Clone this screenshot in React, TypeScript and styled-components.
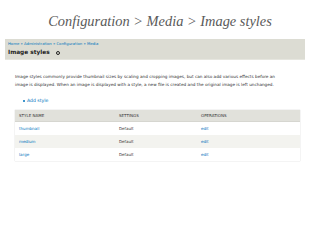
import React from "react";
import styled, { createGlobalStyle } from "styled-components";

const GlobalStyle = createGlobalStyle`
  html, body {
    margin: 0;
    padding: 0;
    background: #ffffff;
  }
  body {
    width: 320px;
    height: 240px;
    overflow: hidden;
    font-family: "DejaVu Sans", "Open Sans", sans-serif;
  }
`;

const Page = styled.div`
  display: flex;
  flex-direction: column;
  width: 320px;
`;

const Title = styled.h1`
  margin: 0;
  padding-top: 13px;
  height: 39px;
  box-sizing: border-box;
  text-align: center;
  font-family: "Liberation Serif", "DejaVu Serif", serif;
  font-style: italic;
  font-weight: normal;
  font-size: 14.4px;
  line-height: 16px;
  color: #5a5a5a;
`;

const Header = styled.div`
  margin: 0 15px 0 5px;
  height: 21px;
  box-sizing: border-box;
  padding: 2px 3px 0;
  background: #dcdcd3;
  border-bottom: 1px solid #e6e6df;
  display: flex;
  flex-direction: column;
`;

const Crumbs = styled.div`
  font-size: 3.8px;
  line-height: 6px;
  color: #0074bd;
`;

const Heading = styled.h2`
  margin: 1px 0 0;
  display: flex;
  align-items: center;
  gap: 4px;
  font-size: 5.8px;
  line-height: 9px;
  font-weight: bold;
  color: #1d1d1d;
`;

const Gear = styled.span`
  flex: none;
  width: 2px;
  height: 2px;
  border: 1px solid #222;
  border-radius: 50%;
  margin: 1px 0 0 2px;
`;

const Content = styled.div`
  padding: 13px 20px 0 15px;
  display: flex;
  flex-direction: column;
`;

const Intro = styled.p`
  margin: 0;
  max-width: 274px;
  font-size: 4.2px;
  line-height: 8px;
  color: #333;
`;

const Action = styled.a`
  margin: 8px 0 0 8px;
  display: flex;
  align-items: center;
  gap: 2px;
  font-size: 4.6px;
  line-height: 7px;
  color: #0074bd;
  text-decoration: none;
  &::before {
    content: "";
    width: 2px;
    height: 2px;
    border-radius: 50%;
    background: #0074bd;
  }
`;

const Table = styled.table`
  margin-top: 6px;
  width: 285px;
  border-collapse: collapse;
  box-shadow: 0 0 1px rgba(0, 0, 0, 0.25);
  font-size: 4px;
`;

const Th = styled.th<{ $w?: number }>`
  background: #e1e1db;
  text-align: left;
  font-weight: normal;
  text-transform: uppercase;
  color: #333;
  height: 11px;
  padding: 0 4px;
  border-bottom: 1px solid #d6d6d0;
  width: ${(p) => (p.$w ? `${p.$w}px` : "auto")};
`;

const Row = styled.tr<{ $alt?: boolean }>`
  background: ${(p) => (p.$alt ? "#f3f3ef" : "#ffffff")};
`;

const Td = styled.td<{ $link?: boolean }>`
  height: 13px;
  padding: 0 4px;
  color: ${(p) => (p.$link ? "#0074bd" : "#333")};
`;

const styles = ["thumbnail", "medium", "large"];

export default function App() {
  return (
    <Page>
      <GlobalStyle />
      <Title>Configuration &gt; Media &gt; Image styles</Title>
      <Header>
        <Crumbs>Home » Administration » Configuration » Media</Crumbs>
        <Heading>
          Image styles <Gear />
        </Heading>
      </Header>
      <Content>
        <Intro>
          Image styles commonly provide thumbnail sizes by scaling and cropping images, but can also add various effects before an
          image is displayed. When an image is displayed with a style, a new file is created and the original image is left unchanged.
        </Intro>
        <Action>Add style</Action>
        <Table>
          <thead>
            <tr>
              <Th $w={92}>Style name</Th>
              <Th $w={74}>Settings</Th>
              <Th>Operations</Th>
            </tr>
          </thead>
          <tbody>
            {styles.map((name, i) => (
              <Row key={name} $alt={i % 2 === 1}>
                <Td $link>{name}</Td>
                <Td>Default</Td>
                <Td $link>edit</Td>
              </Row>
            ))}
          </tbody>
        </Table>
      </Content>
    </Page>
  );
}
